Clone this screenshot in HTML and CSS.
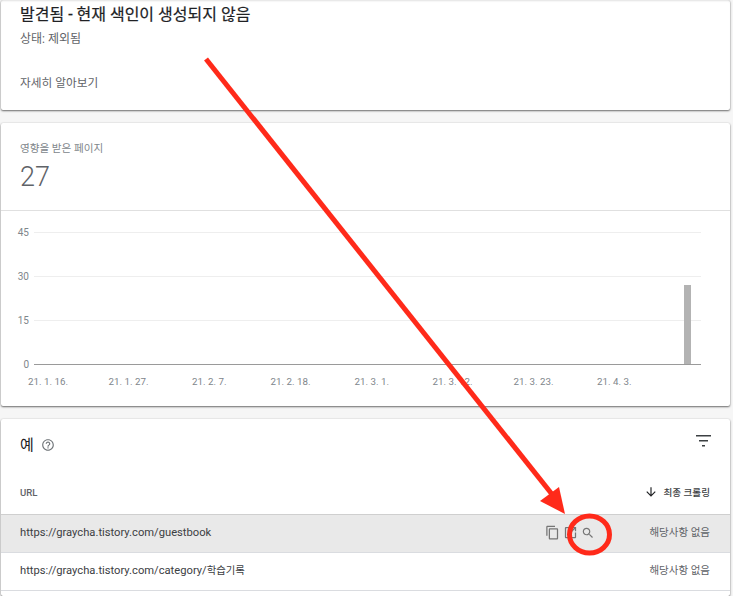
FILE: index.html
```html
<!DOCTYPE html>
<html lang="ko">
<head>
<meta charset="utf-8">
<title>발견됨 - 현재 색인이 생성되지 않음</title>
<link rel="stylesheet" href="styles.css">
</head>
<body>
<main class="page">
  <section class="card summary">
    <h1 class="title">발견됨 - 현재 색인이 생성되지 않음</h1>
    <p class="status">상태: 제외됨</p>
    <a class="learn">자세히 알아보기</a>
  </section>

  <section class="card stats">
    <div class="metric">
      <div class="metric-label">영향을 받은 페이지</div>
      <div class="metric-value">27</div>
    </div>
    <div class="chart">
      <svg class="chart-svg" width="728" height="195" viewBox="0 0 728 195">
        <g class="grid">
          <line x1="33" x2="700" y1="21.5" y2="21.5"/>
          <line x1="33" x2="700" y1="65.5" y2="65.5"/>
          <line x1="33" x2="700" y1="109.5" y2="109.5"/>
        </g>
        <rect class="bar" x="683" y="74" width="7" height="79"/>
        <line class="axis" x1="33" x2="700" y1="153.5" y2="153.5"/>
        <g class="ylabels">
          <text x="28" y="25">45</text>
          <text x="28" y="69">30</text>
          <text x="28" y="113">15</text>
          <text x="28" y="157">0</text>
        </g>
        <g class="xlabels">
          <text x="27" y="174">21. 1. 16.</text>
          <text x="107.500" y="174">21. 1. 27.</text>
          <text x="191" y="174">21. 2. 7.</text>
          <text x="269.500" y="174">21. 2. 18.</text>
          <text x="353.500" y="174">21. 3. 1.</text>
          <text x="431.500" y="174">21. 3. 12.</text>
          <text x="512.500" y="174">21. 3. 23.</text>
          <text x="596" y="174">21. 4. 3.</text>
        </g>
      </svg>
    </div>
  </section>

  <section class="card examples">
    <div class="ex-head">
      <div class="ex-title">
        <h2 class="ex-h">예</h2>
        <svg class="help" width="14" height="14" viewBox="0 0 24 24"><path d="M11 18h2v-2h-2v2zm1-16C6.480 2 2 6.480 2 12s4.480 10 10 10 10-4.480 10-10S17.520 2 12 2zm0 18c-4.410 0-8-3.590-8-8s3.590-8 8-8 8 3.590 8 8-3.590 8-8 8zm0-14c-2.210 0-4 1.790-4 4h2c0-1.100.900-2 2-2s2 .900 2 2c0 2-3 1.750-3 5h2c0-2.250 3-2.500 3-5 0-2.210-1.790-4-4-4z"/></svg>
      </div>
      <svg class="filter" width="15" height="12" viewBox="0 0 15 12"><path d="M0 0h15v1.500H0zM3 5h9v1.500H3zM6 10h3v1.500H6z"/></svg>
    </div>
    <div class="row header">
      <span class="col-url">URL</span>
      <span class="col-sort">
        <svg width="14" height="14" viewBox="0 0 24 24"><path d="M20 12l-1.410-1.410L13 16.170V4h-2v12.170l-5.580-5.590L4 12l8 8 8-8z"/></svg>
        최종 크롤링
      </span>
    </div>
    <div class="row item hover">
      <span class="url">https://graycha.tistory.com/guestbook</span>
      <span class="actions">
        <svg width="15" height="15" viewBox="0 0 24 24"><path d="M16 1H4c-1.100 0-2 .900-2 2v14h2V3h12V1zm3 4H8c-1.100 0-2 .900-2 2v14c0 1.100.900 2 2 2h11c1.100 0 2-.900 2-2V7c0-1.100-.900-2-2-2zm0 16H8V7h11v14z"/></svg>
        <svg width="15" height="15" viewBox="0 0 24 24"><path d="M19 19H5V5h7V3H5c-1.110 0-2 .900-2 2v14c0 1.100.890 2 2 2h14c1.100 0 2-.900 2-2v-7h-2v7zM14 3v2h3.590l-9.830 9.830 1.410 1.410L19 6.410V10h2V3h-7z"/></svg>
        <svg width="14" height="14" viewBox="0 0 24 24"><path d="M15.500 14h-.790l-.280-.270C15.410 12.590 16 11.110 16 9.500 16 5.910 13.090 3 9.500 3S3 5.910 3 9.500 5.910 16 9.500 16c1.610 0 3.090-.590 4.230-1.570l.270.280v.790l5 4.990L20.490 19l-4.990-5zm-6 0C7.010 14 5 11.990 5 9.500S7.010 5 9.500 5 14 7.010 14 9.500 11.990 14 9.500 14z"/></svg>
      </span>
      <span class="val">해당사항 없음</span>
    </div>
    <div class="row item">
      <span class="url">https://graycha.tistory.com/category/<span class="url-ko">학습기록</span></span>
      <span class="val">해당사항 없음</span>
    </div>
  </section>
</main>

<svg class="annotation" width="733" height="596" viewBox="0 0 733 596">
  <line x1="206" y1="59" x2="555" y2="498" stroke="#ff2a1a" stroke-width="5"/>
  <polygon points="565,514 540,501 559,487" fill="#ff2a1a"/>
  <ellipse cx="589.500" cy="534.500" rx="20" ry="18.500" fill="none" stroke="#ff2a1a" stroke-width="5"/>
</svg>
</body>
</html>
```

FILE: styles.css
```css
* { box-sizing: border-box; }
html, body { margin: 0; padding: 0; }
body {
  width: 733px;
  height: 596px;
  overflow: hidden;
  background: #f6f6f6;
  font-family: Roboto, "Noto Sans CJK KR", sans-serif;
  position: relative;
}
.page {
  display: flex;
  flex-direction: column;
  gap: 13px;
  padding: 0 3px 0 1px;
}
.card {
  background: #fff;
  border-radius: 2px;
  box-shadow: 0 1px 2px rgba(0,0,0,.55), 0 0 2px rgba(0,0,0,.12);
}
.summary {
  height: 110px;
  padding: 4px 19px 0;
  display: flex;
  flex-direction: column;
  align-items: flex-start;
  box-shadow: 0 1px 2px rgba(0,0,0,.55), 0 0 2px rgba(0,0,0,.12), inset 0 2px 2px -1px rgba(0,0,0,.12);
}
.title {
  margin: 0;
  font-size: 16px;
  line-height: 22px;
  font-weight: 400;
  color: #202124;
  -webkit-text-stroke: .2px #202124;
}
.status {
  margin: 3px 0 0;
  font-size: 12px;
  line-height: 20px;
  color: #5f6368;
}
.learn {
  margin-top: 24px;
  font-size: 11.700px;
  line-height: 20px;
  color: #5f6368;
}
.stats { height: 283px; }
.metric {
  height: 88px;
  padding: 19px 19px 0;
  border-bottom: 1px solid #e0e0e0;
}
.metric-label {
  font-size: 10.600px;
  line-height: 14px;
  color: #80868b;
}
.metric-value {
  margin-top: 3px;
  font-size: 27px;
  line-height: 36px;
  font-weight: 300;
  color: #5f6368;
}
.chart { height: 195px; }
.chart-svg { display: block; }
.grid line { stroke: #eee; stroke-width: 1; }
.axis { stroke: #9a9a9a; stroke-width: 1; }
.bar { fill: #b3b3b3; }
.ylabels text {
  font-size: 10px;
  fill: #80868b;
  text-anchor: end;
}
.xlabels text {
  font-size: 9.750px;
  fill: #80868b;
}
.examples { height: 177px; }
.ex-head {
  height: 51px;
  padding: 8px 19px 0;
  display: flex;
  justify-content: space-between;
}
.ex-title {
  display: flex;
  align-items: center;
  gap: 7px;
  height: 32px;
}
.ex-h {
  margin: 0;
  font-size: 15px;
  font-weight: 400;
  color: #202124;
}
.help { fill: #6f7478; margin-top: 4px; }
.filter { fill: #3c4043; margin-top: 8px; }
.row {
  display: flex;
  align-items: center;
  padding: 0 20px 2px 19px;
  height: 38px;
  border-bottom: 1px solid #dadce0;
}
.row.header {
  height: 45px;
  padding-bottom: 0;
  border-bottom-color: #cfcfcf;
  justify-content: space-between;
  font-size: 9.600px;
  font-weight: 500;
  color: #5f6368;
}
.col-sort {
  display: flex;
  align-items: center;
  gap: 5px;
  color: #3c4043;
}
.col-sort svg { fill: #202124; }
.item {
  font-size: 11.200px;
  line-height: 16px;
  color: #3c4043;
}
.item.hover { background: #e9e9e9; }
.url { flex: 1; }
.url-ko { font-size: 10.400px; }
.actions {
  display: flex;
  gap: 3px;
  margin-right: 54px;
  align-items: center;
}
.actions svg { fill: #757575; }
.val { color: #5f6368; font-size: 10.500px; }
.annotation {
  position: absolute;
  left: 0;
  top: 0;
  pointer-events: none;
}
```
